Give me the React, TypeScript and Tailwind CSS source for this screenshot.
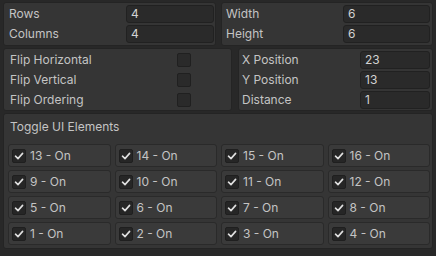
const font = { fontFamily: 'Inter, "Noto Sans", sans-serif' };

function Field({ label, value, labelW }: { label: string; value: string; labelW: string }) {
  return (
    <div className="flex items-center h-[18px]">
      <div className={`${labelW} shrink-0 text-[12px] text-[#c4c4c4]`}>{label}</div>
      <div className="flex-1 h-full rounded-[3px] bg-[#2a2a2a] border border-[#212121] flex items-center pl-[4px] text-[12px] text-[#d2d2d2]">
        {value}
      </div>
    </div>
  );
}

function Check() {
  return (
    <svg width="10" height="10" viewBox="0 0 10 10" fill="none">
      <path d="M1.5 5.2 L4 7.6 L8.6 2.4" stroke="#e0e0e0" strokeWidth="1.6" strokeLinecap="round" strokeLinejoin="round" />
    </svg>
  );
}

export default function App() {
  const toggles = [13, 14, 15, 16, 9, 10, 11, 12, 5, 6, 7, 8, 1, 2, 3, 4];

  return (
    <div className="w-[436px] h-[256px] bg-[#282828] px-[3px] pt-[2px] flex flex-col gap-[2px]" style={font}>
      {/* Grid size */}
      <div className="flex gap-[5px]">
        <div className="w-[213px] h-[44px] bg-[#353535] border border-[#242424] rounded-[3px] pl-[5px] pr-[1px] pt-[2px] flex flex-col gap-[2px]">
          <Field label="Rows" value="4" labelW="w-[117px]" />
          <Field label="Columns" value="4" labelW="w-[117px]" />
        </div>
        <div className="flex-1 h-[44px] bg-[#353535] border border-[#242424] rounded-[3px] pl-[4px] pr-[2px] pt-[2px] flex flex-col gap-[2px]">
          <Field label="Width" value="6" labelW="w-[117px]" />
          <Field label="Height" value="6" labelW="w-[117px]" />
        </div>
      </div>

      {/* Flip + position */}
      <div className="flex gap-[6px]">
        <div className="w-[229px] h-[63px] bg-[#353535] border border-[#242424] rounded-[3px] pl-[6px] pt-[1px] flex flex-col">
          {['Flip Horizontal', 'Flip Vertical', 'Flip Ordering'].map((l) => (
            <div key={l} className="flex items-center h-[20px]">
              <div className="w-[167px] text-[12px] text-[#c4c4c4]">{l}</div>
              <div className="w-[14px] h-[14px] rounded-[2px] bg-[#2a2a2a] border border-[#202020]" />
            </div>
          ))}
        </div>
        <div className="flex-1 h-[63px] bg-[#353535] border border-[#242424] rounded-[3px] pl-[3px] pr-[2px] pt-[2px] flex flex-col gap-[2px]">
          {[
            ['X Position', '23'],
            ['Y Position', '13'],
            ['Distance', '1'],
          ].map(([l, v]) => (
            <Field key={l} label={l} value={v} labelW="w-[118px]" />
          ))}
        </div>
      </div>

      {/* Toggle UI Elements */}
      <div className="h-[136px] bg-[#353535] border border-[#242424] rounded-[3px] pl-[4px] pr-[2px] pt-[4px]">
        <div className="pl-[2px] h-[18px] flex items-center text-[12px] text-[#c4c4c4]">Toggle UI Elements</div>
        <div className="mt-[8px] grid grid-cols-4 gap-x-[4px] gap-y-[3px]">
          {toggles.map((n) => (
            <div
              key={n}
              className="h-[23px] bg-[#3a3a3a] border border-[#2a2a2a] rounded-[3px] flex items-center pl-[3px] gap-[4px]"
            >
              <div className="w-[14px] h-[14px] rounded-[2px] bg-[#262626] border border-[#1f1f1f] flex items-center justify-center">
                <Check />
              </div>
              <span className="text-[12px] text-[#c4c4c4]">{n} - On</span>
            </div>
          ))}
        </div>
      </div>
    </div>
  );
}
